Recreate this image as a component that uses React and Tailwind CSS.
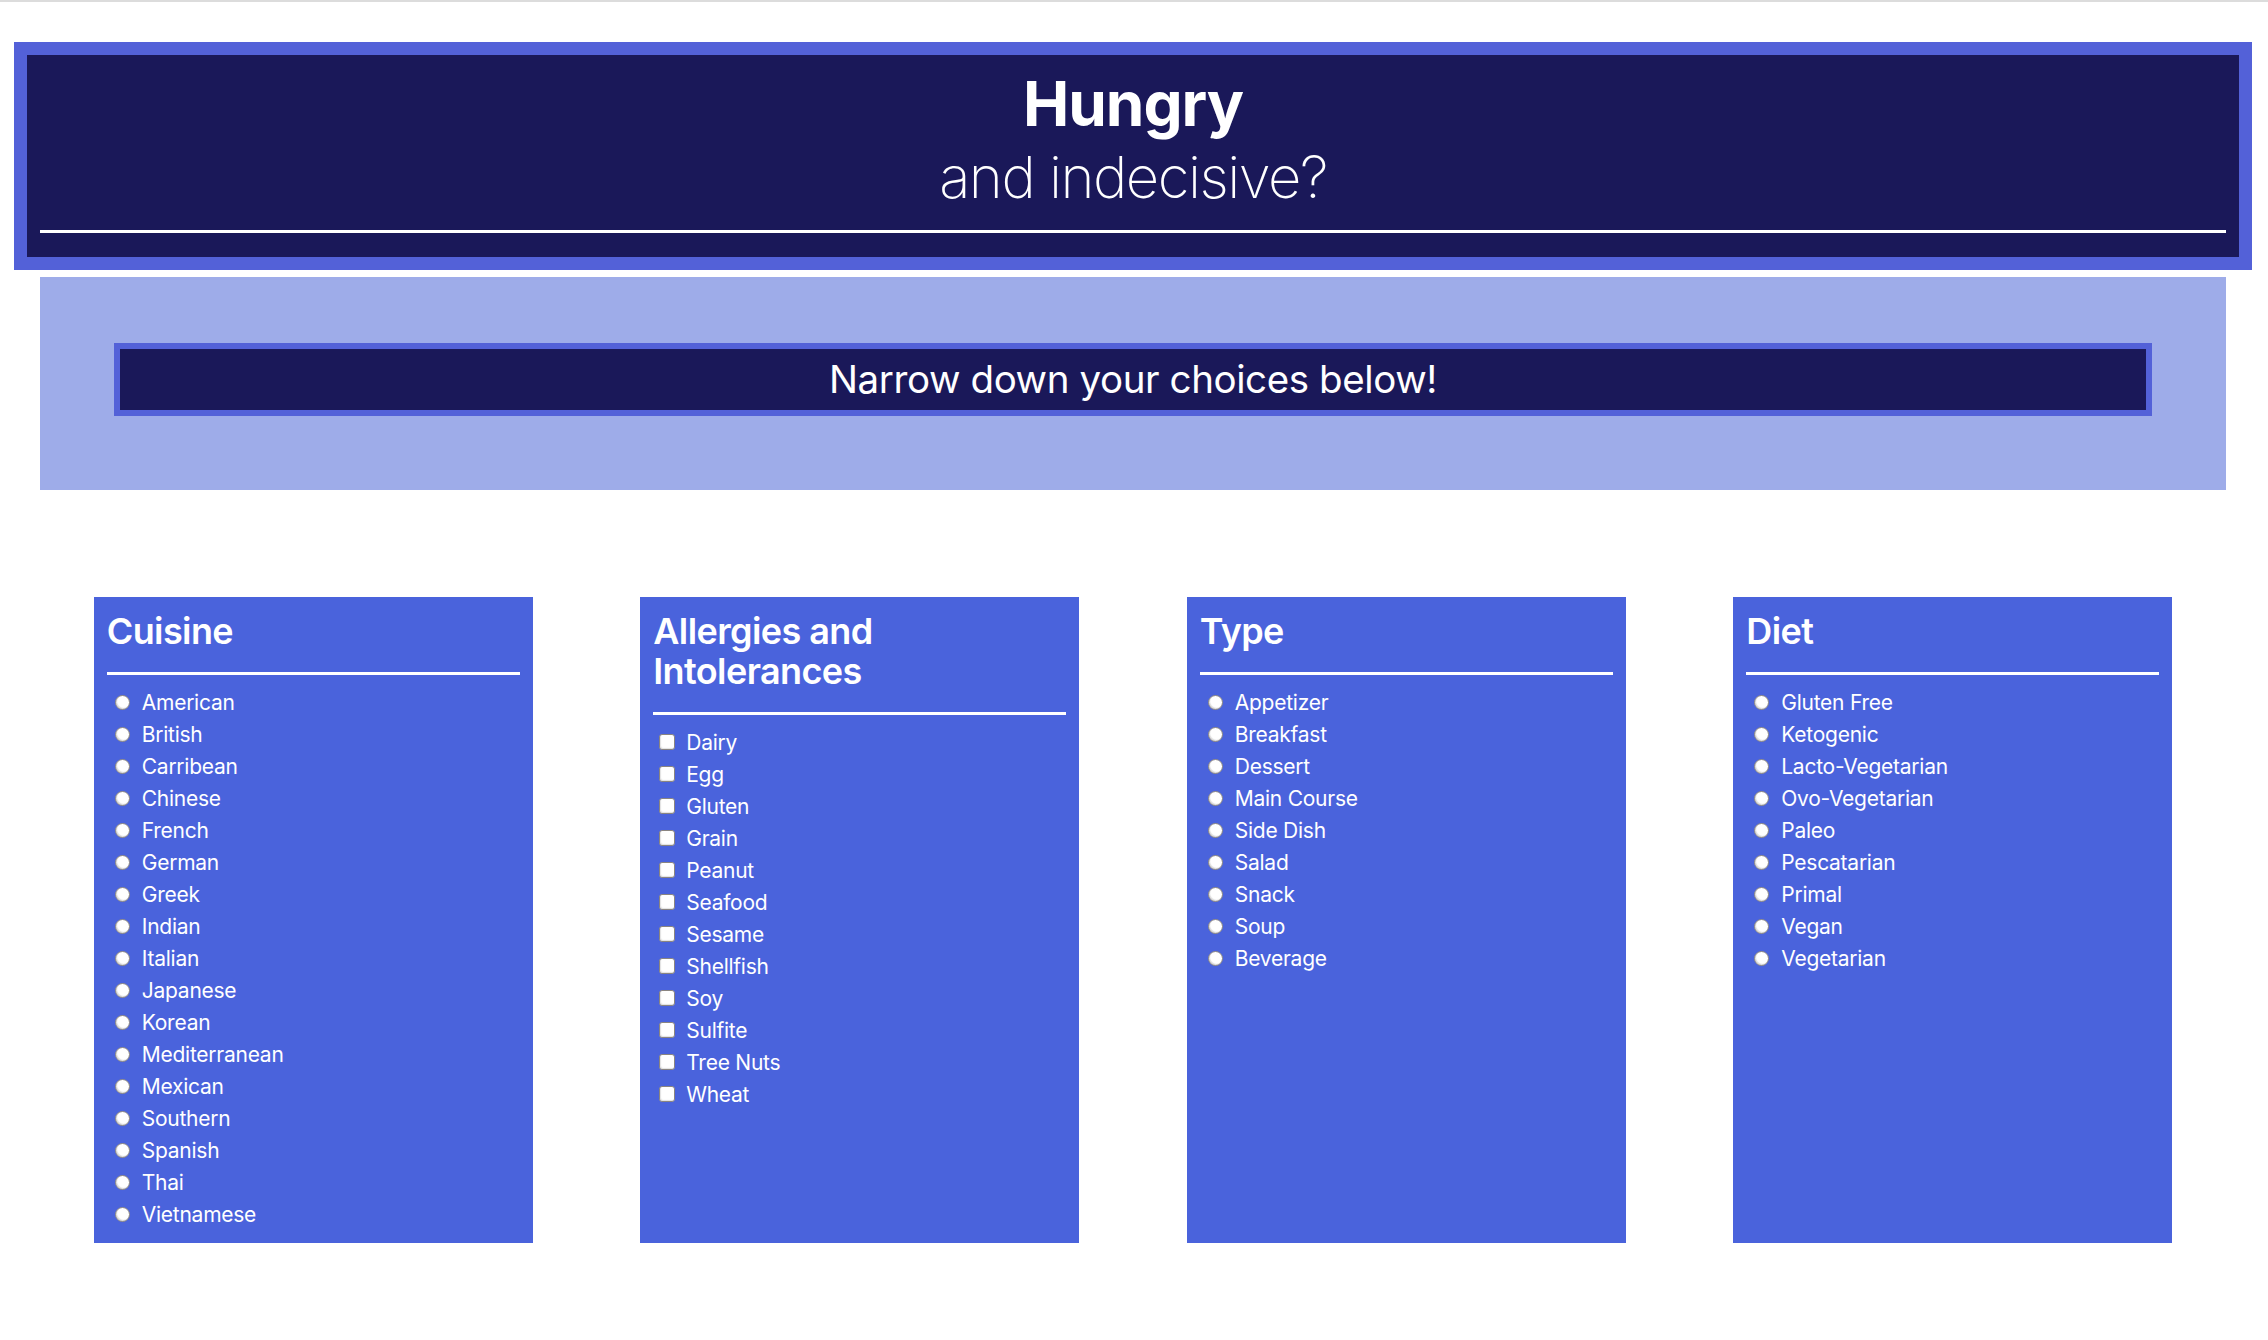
import React from 'react';

const categories = [
  {
    title: 'Cuisine',
    kind: 'radio',
    items: ['American', 'British', 'Carribean', 'Chinese', 'French', 'German', 'Greek', 'Indian', 'Italian', 'Japanese', 'Korean', 'Mediterranean', 'Mexican', 'Southern', 'Spanish', 'Thai', 'Vietnamese'],
  },
  {
    title: 'Allergies and Intolerances',
    kind: 'checkbox',
    items: ['Dairy', 'Egg', 'Gluten', 'Grain', 'Peanut', 'Seafood', 'Sesame', 'Shellfish', 'Soy', 'Sulfite', 'Tree Nuts', 'Wheat'],
  },
  {
    title: 'Type',
    kind: 'radio',
    items: ['Appetizer', 'Breakfast', 'Dessert', 'Main Course', 'Side Dish', 'Salad', 'Snack', 'Soup', 'Beverage'],
  },
  {
    title: 'Diet',
    kind: 'radio',
    items: ['Gluten Free', 'Ketogenic', 'Lacto-Vegetarian', 'Ovo-Vegetarian', 'Paleo', 'Pescatarian', 'Primal', 'Vegan', 'Vegetarian'],
  },
];

const Radio = () => (
  <span className="ml-[8px] mr-[12px] w-[15px] h-[15px] shrink-0 rounded-full bg-white border border-[#8a8580] shadow-[inset_1px_-1px_1px_rgba(0,0,0,0.15)]" />
);

const Checkbox = () => (
  <span className="ml-[6px] mr-[11px] w-[16px] h-[16px] shrink-0 rounded-[3px] bg-white border border-[#8a8580] shadow-[inset_1px_-1px_1px_rgba(0,0,0,0.12)]" />
);

const FilterCard = ({ category }) => (
  <div className="w-[439px] bg-[#4a63dc] px-[13px] pt-[14px] pb-[12px] text-white">
    <h2 className="text-[36px] leading-[40px] font-semibold tracking-[-0.6px]">{category.title}</h2>
    <div className="mt-[21px] h-[3px] bg-white" />
    <ul className="mt-[12px]">
      {category.items.map((item) => (
        <li key={item} className="flex items-center h-[32px] text-[21px] tracking-[-0.25px]">
          <span className="-mt-[2px] flex">
            {category.kind === 'radio' ? <Radio /> : <Checkbox />}
          </span>
          <span>{item}</span>
        </li>
      ))}
    </ul>
  </div>
);

export default function App() {
  return (
    <div className="min-h-screen bg-white border-t-2 border-[#dcdcdc] font-['Inter','Noto_Sans',sans-serif]">
      {/* Header */}
      <header className="mt-[40px] ml-[14px] mr-[16px] border-[13px] border-[#5361d8] bg-[#1a1859] text-white">
        <div className="px-[13px] pt-[14px] pb-[24px]">
          <h1 className="text-center leading-[70px]">
            <span className="block text-[62px] font-bold tracking-[-1px]">Hungry</span>
            <span className="block mt-[3px] text-[58px] font-extralight tracking-[-1.5px]">and indecisive?</span>
          </h1>
          <div className="mt-[18px] h-[3px] bg-white" />
        </div>
      </header>

      {/* Banner */}
      <section className="mt-[7px] ml-[40px] mr-[42px] bg-[#9eace9] pt-[66px] pb-[74px] px-[74px]">
        <div className="border-[6px] border-[#5361d8] bg-[#1a1859] h-[73px] flex items-center justify-center">
          <p className="text-white text-[38.5px] tracking-[-0.4px]">Narrow down your choices below!</p>
        </div>
      </section>

      {/* Filters */}
      <main className="mt-[107px] ml-[40px] mr-[42px] flex justify-around items-stretch pb-[80px]">
        {categories.map((c) => (
          <FilterCard key={c.title} category={c} />
        ))}
      </main>
    </div>
  );
}
